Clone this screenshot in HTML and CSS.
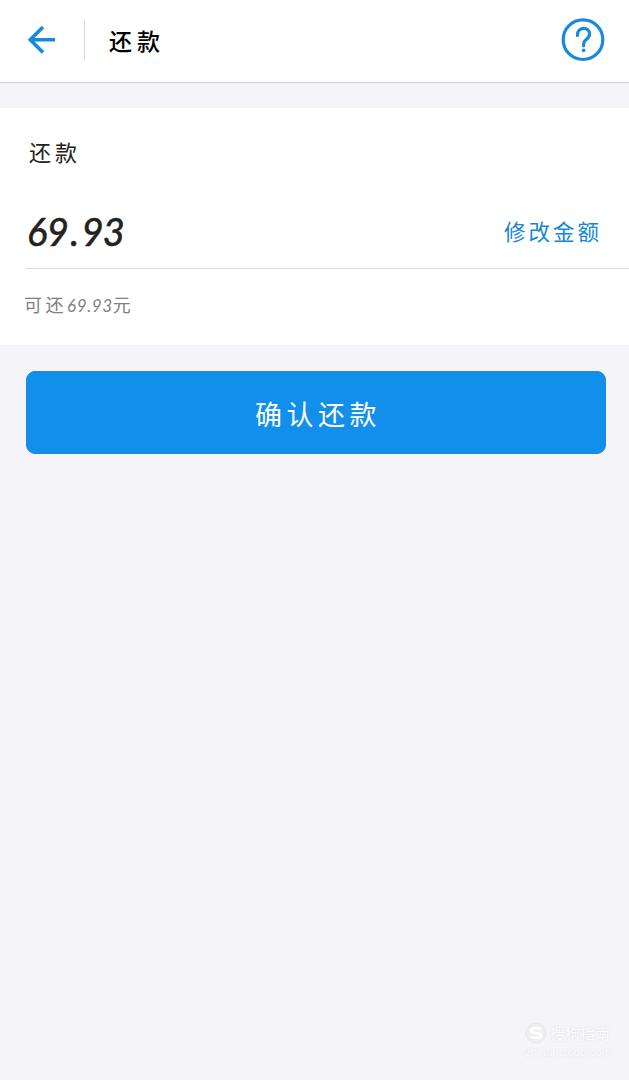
FILE: index.html
```
<!DOCTYPE html>
<html lang="zh-CN">
<head>
<meta charset="utf-8">
<title>还款</title>
<link rel="stylesheet" href="styles.css">
</head>
<body>
<header class="topbar">
  <svg class="back" width="30" height="30" viewBox="0 0 30 30"><path d="M28 14.7H3.5M16 2L3.3 14.7L16 27.4"/></svg>
  <span class="divider"></span>
  <h1 class="title">还款</h1>
  <svg class="help" width="44" height="44" viewBox="0 0 44 44"><circle cx="22" cy="21.7" r="19.8"/><path d="M16.4 17.4C16.4 8.2 28.6 8.4 28.6 16C28.6 21.2 22.6 21.3 22.6 26V27.8"/><circle class="dot" cx="22.6" cy="32.4" r="1.8"/></svg>
</header>
<main>
  <section class="card">
    <div class="label">还款</div>
    <div class="amount-row">
      <span class="amount">69<span class="point">.</span>93</span>
      <a class="edit">修改金额</a>
    </div>
    <div class="hint">可还<span class="hint-num">69.93</span>元</div>
  </section>
  <button class="confirm">确认还款</button>
</main>
<footer class="watermark">
  <div class="brand">
    <svg width="22" height="22" viewBox="0 0 22 22"><circle cx="11" cy="11" r="10"/><path d="M16 7.5C13 5.5 6 5.5 6 8.5C6 12 16 10 16 13.5C16 16.5 9 16.5 6 14.5"/></svg>
    <span>搜狗指南</span>
  </div>
  <div class="site">zhinan.sogo.com</div>
</footer>
</body>
</html>
```
FILE: styles.css
```
* { box-sizing: border-box; }
body {
  margin: 0;
  height: 1080px;
  display: flex;
  flex-direction: column;
  background: #f4f4f9;
  font-family: "Noto Sans CJK SC", sans-serif;
  overflow: hidden;
}
.topbar {
  height: 83px;
  padding: 0 24px 3px 27px;
  display: flex;
  align-items: center;
  background: #fff;
  border-bottom: 1px solid #cfcfd6;
}
.back { fill: none; stroke: #1989dc; stroke-width: 3.6; }
.divider { width: 1px; height: 42px; margin: 0 24px 0 27px; background: #d9d9dc; }
.title {
  margin: 0;
  font-size: 23px;
  line-height: 30px;
  font-weight: 500;
  letter-spacing: 5px;
  color: #000;
}
.help { margin-left: auto; fill: none; stroke: #1989dc; stroke-width: 3.2; stroke-linecap: round; }
.help .dot { fill: #1989dc; stroke: none; }
.card {
  height: 237px;
  margin-top: 25px;
  padding: 28px 0 0 26px;
  background: #fff;
}
.label {
  padding-left: 3px;
  font-size: 22px;
  line-height: 30px;
  letter-spacing: 4px;
  color: #222;
}
.amount-row {
  height: 103px;
  padding: 28px 27px 0 1px;
  display: flex;
  align-items: center;
  justify-content: space-between;
  border-bottom: 1px solid #dadadc;
}
.amount {
  font: italic 400 38px/50px Lato, sans-serif;
  letter-spacing: -0.6px;
  -webkit-text-stroke: 0.6px #222;
  color: #222;
}
.point { margin: 0 3px 0 2px; }
.edit {
  font-size: 21.5px;
  line-height: 50px;
  letter-spacing: 3px;
  color: #1585d8;
}
.hint {
  margin-left: -2px;
  padding-top: 22px;
  font-size: 18px;
  line-height: 26px;
  letter-spacing: 3.5px;
  color: #808080;
}
.hint-num { font: italic 17px/26px Lato, sans-serif; letter-spacing: 0.6px; }
.confirm {
  display: block;
  width: 580px;
  height: 83px;
  margin: 26px 0 0 26px;
  padding: 2px 0 0 4px;
  border: 1px solid #2488d8;
  border-radius: 9px;
  background: #128eeb;
  color: #fff;
  font: 27px/79px "Noto Sans CJK SC", sans-serif;
  letter-spacing: 4.5px;
}
.watermark {
  margin: auto 19px 20px auto;
  width: 85px;
  color: #fdfdff;
  text-shadow: 0 0 2px #d9d9e2;
}
.brand { display: flex; align-items: center; gap: 3px; font-size: 15px; line-height: 24px; white-space: nowrap; }
.brand svg { flex: none; fill: #eeeef3; stroke: #e5e5ec; }
.brand path { fill: none; stroke: #fff; stroke-width: 2.6; }
.site { font: 11.4px/15px "Liberation Sans", sans-serif; }
```
